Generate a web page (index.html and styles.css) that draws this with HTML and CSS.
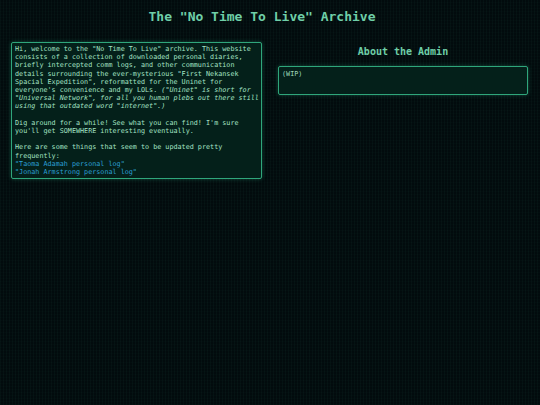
FILE: index.html
```html
<!DOCTYPE html>
<html>
<head>
<meta charset="utf-8">
<link rel="stylesheet" href="styles.css">
</head>
<body>
<h1 class="title">The "No Time To Live" Archive</h1>
<main class="columns">
  <section class="panel intro">
    <p>Hi, welcome to the "No Time To Live" archive. This website<br>consists of a collection of downloaded personal diaries,<br>briefly intercepted comm logs, and other communication<br>details surrounding the ever-mysterious "First Nekansek<br>Spacial Expedition", reformatted for the Uninet for<br>everyone's convenience and my LOLs. <em>("Uninet" is short for<br>"Universal Network", for all you human plebs out there still<br>using that outdated word "internet".)</em></p>
    <p>Dig around for a while! See what you can find! I'm sure<br>you'll get SOMEWHERE interesting eventually.</p>
    <p>Here are some things that seem to be updated pretty<br>frequently:<br><a class="link" href="#">"Taoma Adamah personal log"</a><br><a class="link" href="#">"Jonah Armstrong personal log"</a></p>
  </section>
  <section class="side">
    <h2 class="side-title">About the Admin</h2>
    <div class="panel admin">(WIP)</div>
  </section>
</main>
</body>
</html>
```
FILE: styles.css
```css
html, body {
  margin: 0;
  padding: 0;
}
body {
  width: 540px;
  height: 405px;
  overflow: hidden;
  background-color: #020b0d;
  background-image:
    repeating-linear-gradient(90deg, rgba(40, 110, 90, 0.07) 0 1px, transparent 1px 3px),
    repeating-linear-gradient(0deg, rgba(40, 110, 90, 0.03) 0 1px, transparent 1px 3px);
  font-family: "DejaVu Sans Mono", monospace;
  color: #a3e2c4;
}
.title {
  margin: 0;
  padding: 9px 16px 0 0;
  height: 33px;
  box-sizing: border-box;
  text-align: center;
  font-size: 13px;
  line-height: 16px;
  font-weight: bold;
  color: #6fcfa8;
}
.columns {
  display: grid;
  grid-template-columns: 251px 250px;
  column-gap: 16px;
  padding: 9px 0 0 11px;
  align-items: start;
}
.panel {
  border: 1px solid #2fa67b;
  border-radius: 2px;
  background: #04201a;
  box-shadow: 0 0 4px rgba(47, 166, 123, 0.4);
  font-size: 6.75px;
  line-height: 8.2px;
}
.intro {
  padding: 2px 3px 2px 3px;
}
.intro p {
  margin: 0 0 8.2px 0;
  white-space: nowrap;
}
.intro p:last-child {
  margin-bottom: 0;
}
.intro em {
  font-style: oblique;
}
.link {
  color: #2a9fd4;
  text-decoration: none;
}
.side-title {
  margin: 0;
  padding-top: 3px;
  height: 24px;
  box-sizing: border-box;
  text-align: center;
  font-size: 10px;
  line-height: 14px;
  font-weight: bold;
  color: #6fcfa8;
}
.admin {
  height: 29px;
  box-sizing: border-box;
  padding: 3px 3px;
  color: #9fd8bc;
}
```
